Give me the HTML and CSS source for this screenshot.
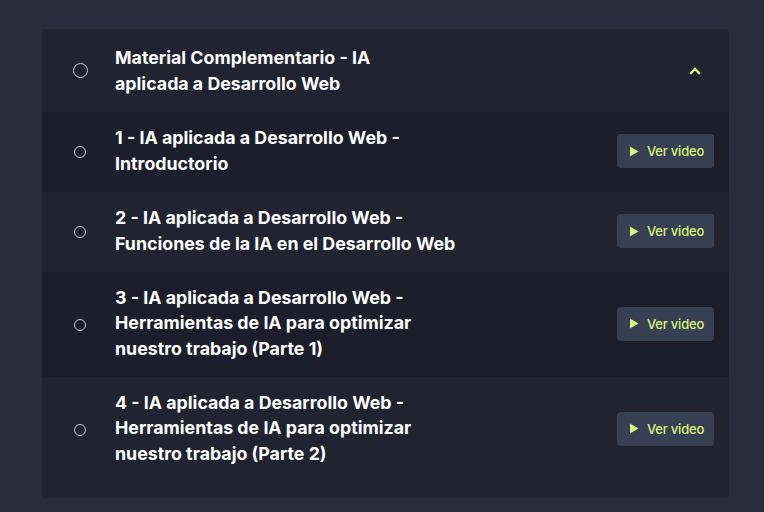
FILE: index.html
```html
<!DOCTYPE html>
<html lang="es">
<head>
<meta charset="utf-8">
<title>Material Complementario</title>
<link rel="stylesheet" href="styles.css">
</head>
<body>
<section class="card">
  <div class="head">
    <span class="circle circle-lg"></span>
    <h2 class="head-title">Material Complementario - IA aplicada a Desarrollo Web</h2>
    <svg class="chev" width="12" height="8" viewBox="0 0 12 8"><path d="M2 6 L6 2 L10 6" fill="none" stroke="#d6f27c" stroke-width="2.4" stroke-linecap="square"/></svg>
  </div>
  <div class="row dark r2">
    <span class="circle"></span>
    <p class="title">1 - IA aplicada a Desarrollo Web - Introductorio</p>
    <button class="btn"><svg width="10" height="11" viewBox="0 0 10 11"><path d="M1 0.5 L9.5 5.5 L1 10.5 Z" fill="#d6f27c"/></svg>Ver video</button>
  </div>
  <div class="row r2">
    <span class="circle"></span>
    <p class="title">2 - IA aplicada a Desarrollo Web - Funciones de la IA en el Desarrollo Web</p>
    <button class="btn"><svg width="10" height="11" viewBox="0 0 10 11"><path d="M1 0.5 L9.5 5.5 L1 10.5 Z" fill="#d6f27c"/></svg>Ver video</button>
  </div>
  <div class="row dark r3">
    <span class="circle"></span>
    <p class="title">3 - IA aplicada a Desarrollo Web - Herramientas de IA para optimizar nuestro trabajo (Parte 1)</p>
    <button class="btn"><svg width="10" height="11" viewBox="0 0 10 11"><path d="M1 0.5 L9.5 5.5 L1 10.5 Z" fill="#d6f27c"/></svg>Ver video</button>
  </div>
  <div class="row r3">
    <span class="circle"></span>
    <p class="title">4 - IA aplicada a Desarrollo Web - Herramientas de IA para optimizar nuestro trabajo (Parte 2)</p>
    <button class="btn"><svg width="10" height="11" viewBox="0 0 10 11"><path d="M1 0.5 L9.5 5.5 L1 10.5 Z" fill="#d6f27c"/></svg>Ver video</button>
  </div>
</section>
</body>
</html>
```
FILE: styles.css
```css
* { box-sizing: border-box; }
html, body { margin: 0; padding: 0; }
body {
  background: #2a2c3d;
  font-family: Inter, "Noto Sans", sans-serif;
  width: 764px;
  height: 512px;
  overflow: hidden;
  padding: 29px 0 0 42px;
}
.card {
  width: 687px;
  background: #212330;
  border-radius: 4px;
  padding-bottom: 16px;
  overflow: hidden;
}
.head {
  height: 83px;
  display: flex;
  align-items: center;
  padding: 0 28px 0 31px;
}
.circle {
  flex: none;
  width: 12px;
  height: 12px;
  border: 1.5px solid #c9c9cc;
  border-radius: 50%;
}
.circle-lg {
  width: 15px;
  height: 15px;
}
.head-title {
  margin: 0 0 0 27px;
  max-width: 290px;
  font-size: 17.8px;
  line-height: 26px;
  font-weight: 700;
  color: #fff;
}
.chev { margin-left: auto; }
.row {
  display: flex;
  align-items: center;
  padding: 0 15px 0 32px;
}
.row.dark { background: #1d1e2b; }
.r2 { height: 80px; }
.r3 { height: 105px; }
.title {
  margin: 0 0 3px 29px;
  max-width: 350px;
  font-size: 17.8px;
  line-height: 25.5px;
  font-weight: 700;
  color: #fff;
}
.btn {
  margin: 0 0 2px auto;
  width: 97px;
  height: 34px;
  border: 0;
  border-radius: 4px;
  background: #373f52;
  color: #d6f37a;
  font-family: Inter, "Noto Sans", sans-serif;
  font-size: 13px;
  font-weight: 500;
  letter-spacing: -0.2px;
  display: flex;
  align-items: center;
  padding: 0 0 0 12px;
  gap: 8px;
}
```
